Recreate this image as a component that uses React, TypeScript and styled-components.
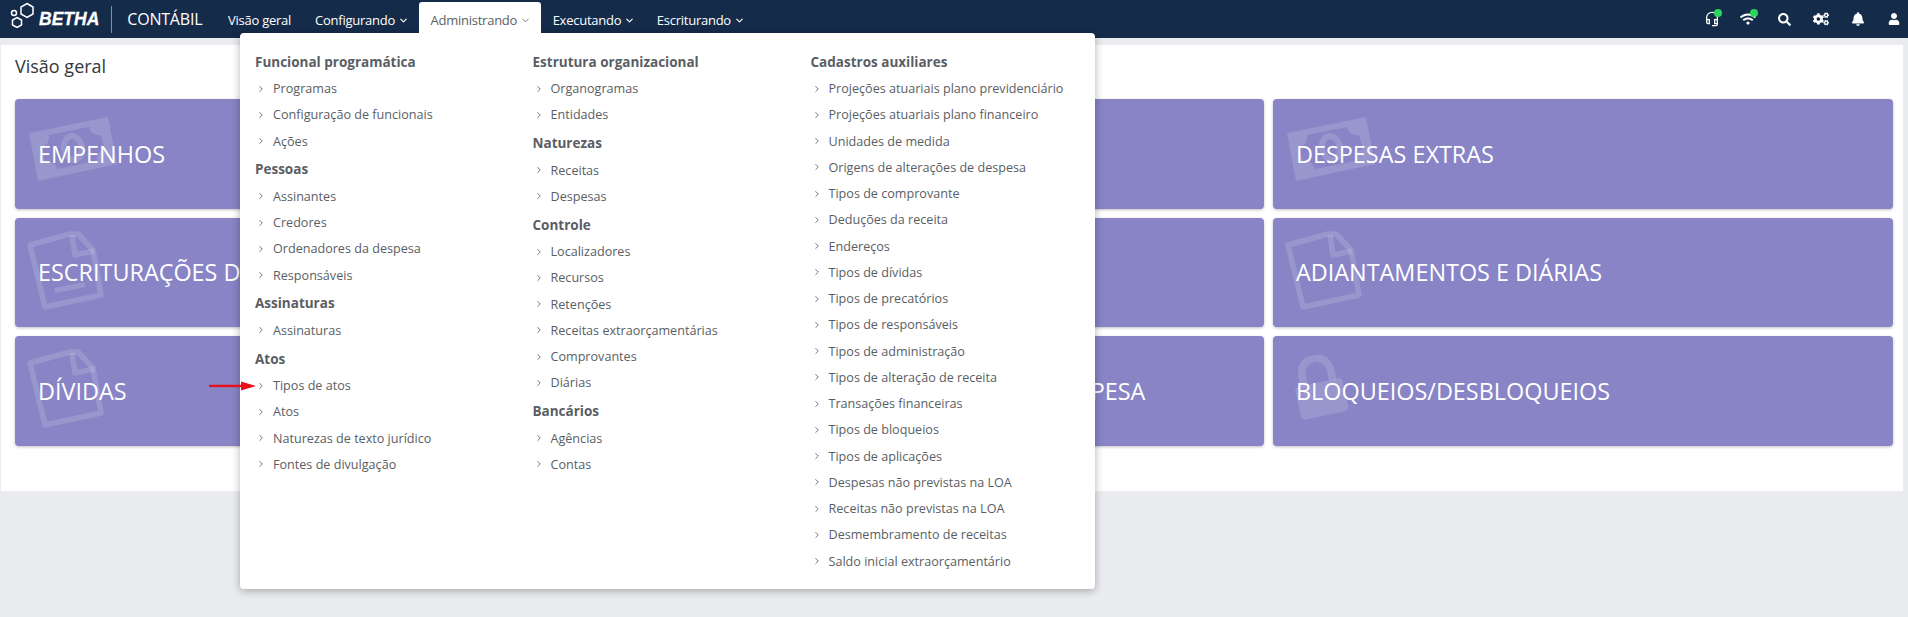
import React from "react"
import styled, { createGlobalStyle } from "styled-components"
import { ChevronDown, ChevronRight } from "lucide-react"
import { FaSearch, FaCogs, FaBell, FaUser, FaWifi } from "react-icons/fa"
import { MdOutlineHeadsetMic } from "react-icons/md"

const GlobalStyle = createGlobalStyle`
    html, body {
        margin: 0;
        padding: 0;
        height: 100%;
        background: #ebecf0;
        font-family: "Open Sans", "Noto Sans", sans-serif;
        overflow: hidden;
    }
`

type MenuEntry = { title: string; items: string[] }

const columns: MenuEntry[][] = [
    [
        { title: "Funcional programática", items: ["Programas", "Configuração de funcionais", "Ações"] },
        { title: "Pessoas", items: ["Assinantes", "Credores", "Ordenadores da despesa", "Responsáveis"] },
        { title: "Assinaturas", items: ["Assinaturas"] },
        { title: "Atos", items: ["Tipos de atos", "Atos", "Naturezas de texto jurídico", "Fontes de divulgação"] },
    ],
    [
        { title: "Estrutura organizacional", items: ["Organogramas", "Entidades"] },
        { title: "Naturezas", items: ["Receitas", "Despesas"] },
        { title: "Controle", items: ["Localizadores", "Recursos", "Retenções", "Receitas extraorçamentárias", "Comprovantes", "Diárias"] },
        { title: "Bancários", items: ["Agências", "Contas"] },
    ],
    [
        {
            title: "Cadastros auxiliares",
            items: [
                "Projeções atuariais plano previdenciário",
                "Projeções atuariais plano financeiro",
                "Unidades de medida",
                "Origens de alterações de despesa",
                "Tipos de comprovante",
                "Deduções da receita",
                "Endereços",
                "Tipos de dívidas",
                "Tipos de precatórios",
                "Tipos de responsáveis",
                "Tipos de administração",
                "Tipos de alteração de receita",
                "Transações financeiras",
                "Tipos de bloqueios",
                "Tipos de aplicações",
                "Despesas não previstas na LOA",
                "Receitas não previstas na LOA",
                "Desmembramento de receitas",
                "Saldo inicial extraorçamentário",
            ],
        },
    ],
]

type Glyph = "money" | "file" | "fileText" | "lock"

const cards: { label: string; icon: Glyph }[] = [
    { label: "EMPENHOS", icon: "money" },
    { label: "LIQUIDAÇÕES", icon: "money" },
    { label: "DESPESAS EXTRAS", icon: "money" },
    { label: "ESCRITURAÇÕES DE DESPESA", icon: "fileText" },
    { label: "RESTOS A PAGAR", icon: "file" },
    { label: "ADIANTAMENTOS E DIÁRIAS", icon: "file" },
    { label: "DÍVIDAS", icon: "file" },
    { label: "ALTERAÇÕES ORÇAMENTÁRIAS DA DESPESA", icon: "file" },
    { label: "BLOQUEIOS/DESBLOQUEIOS", icon: "lock" },
]

const Watermark: React.FC<{ icon: Glyph }> = ({ icon }) => {
    if (icon === "money") {
        return (
            <MoneyMark viewBox="0 0 92 72" fill="none">
                <path
                    fillRule="evenodd"
                    fill="currentColor"
                    d="M1 19 L80 3 L89 50 L10 67 Z M21 21 L61 13 A10 10 0 0 0 73 21 L77 35 A10 10 0 0 0 69 47 L29 55 A10 10 0 0 0 17 47 L13 33 A10 10 0 0 0 21 21 Z"
                />
                <ellipse cx="45" cy="34" rx="9" ry="12" stroke="currentColor" strokeWidth="6" transform="rotate(-12 45 34)" />
            </MoneyMark>
        )
    }
    if (icon === "lock") {
        return (
            <LockMark viewBox="0 0 60 72" fill="none">
                <path fill="currentColor" d="M6 32 L54 32 C57 32 58 34 58 36 L58 66 C58 69 56 71 54 71 L6 71 C3 71 2 69 2 66 L2 36 C2 34 3 32 6 32 Z" />
                <path stroke="currentColor" strokeWidth="9" d="M13 33 L13 22 C13 -3 47 -3 47 22 L47 33" />
            </LockMark>
        )
    }
    return (
        <FileMark viewBox="0 0 100 100" fill="none">
            <path stroke="currentColor" strokeWidth="5.5" strokeLinejoin="round" d="M15 27 L55 16 L63 16 L78 32 L86 77 L30 89 Z" />
            <path stroke="currentColor" strokeWidth="5.5" strokeLinejoin="round" d="M57 17 L60 37 L79 33" />
            {icon === "fileText" && <path stroke="currentColor" strokeWidth="5" d="M40 72.5 L70 66.5" />}
        </FileMark>
    )
}

const App: React.FC = () => {
    return (
        <Page>
            <GlobalStyle />
            <NavBar>
                <Brand>
                    <LogoMark viewBox="0 0 24 26" fill="none" stroke="#fff" strokeWidth="1.5">
                        <path d="M17 1.5 L23 5 L23 12 L17 15.5 L11 12 L11 5 Z" />
                        <path d="M7 15.5 L11.5 18 L11.5 23 L7 25.5 L2.5 23 L2.5 18 Z" />
                        <circle cx="4" cy="11" r="2.5" />
                    </LogoMark>
                    <BrandName>BETHA</BrandName>
                    <BrandDivider />
                    <ProductName>CONTÁBIL</ProductName>
                </Brand>
                <NavItem $plain>Visão geral</NavItem>
                <NavItem>Configurando <ChevronDown size={11} strokeWidth={2.5} /></NavItem>
                <NavItem $active>Administrando <ChevronDown size={11} strokeWidth={1.75} /></NavItem>
                <NavItem>Executando <ChevronDown size={11} strokeWidth={2.5} /></NavItem>
                <NavItem>Escriturando <ChevronDown size={11} strokeWidth={2.5} /></NavItem>
                <NavIcons>
                    <NavIcon $online><MdOutlineHeadsetMic size={20} /></NavIcon>
                    <NavIcon $online><FaWifi size={18} /></NavIcon>
                    <NavIcon><FaSearch size={13} /></NavIcon>
                    <NavIcon><FaCogs size={16} /></NavIcon>
                    <NavIcon><FaBell size={14} /></NavIcon>
                    <NavIcon><FaUser size={12} /></NavIcon>
                </NavIcons>
            </NavBar>
            <Panel>
                <PanelTitle>Visão geral</PanelTitle>
                <CardGrid>
                    {cards.map((c, i) => (
                        <Card key={i}>
                            <Watermark icon={c.icon} />
                            <CardLabel>{c.label}</CardLabel>
                        </Card>
                    ))}
                </CardGrid>
            </Panel>
            <Menu>
                {columns.map((col, i) => (
                    <div key={i}>
                        {col.map((group) => (
                            <div key={group.title}>
                                <MenuTitle>{group.title}</MenuTitle>
                                {group.items.map((item) => (
                                    <MenuItem key={item}>
                                        <ChevronRight size={10} />
                                        {item}
                                    </MenuItem>
                                ))}
                            </div>
                        ))}
                    </div>
                ))}
            </Menu>
            <RedArrow viewBox="0 0 48 10">
                <path d="M0 3.8 L32 3.8 L32 0.5 L47 5 L32 9.5 L32 6.2 L0 6 Z" fill="#e8101c" />
            </RedArrow>
        </Page>
    )
}

const Page = styled.div`
    position: relative;
    height: 617px;
    overflow: hidden;
    background: #ebecf0;
`

const NavBar = styled.div`
    height: 38px;
    background: #152b4a;
    display: flex;
    align-items: stretch;
    color: #fff;
`

const Brand = styled.div`
    width: 216px;
    display: flex;
    align-items: center;
    padding-left: 10px;
    box-sizing: border-box;
`

const LogoMark = styled.svg`
    width: 24px;
    height: 26px;
    margin-bottom: 8px;
    flex: none;
`

const BrandName = styled.span`
    font-family: "Liberation Sans", sans-serif;
    font-weight: 700;
    font-style: italic;
    font-size: 17.5px;
    margin-left: 5px;
    -webkit-text-stroke: 0.3px #fff;
`

const BrandDivider = styled.span`
    width: 1px;
    height: 27px;
    background: #8884c6;
    margin: 0 15px 0 12px;
`

const ProductName = styled.span`
    font-size: 16px;
    letter-spacing: -0.2px;
`

const NavItem = styled.div<{ $active?: boolean; $plain?: boolean }>`
    display: flex;
    align-items: center;
    gap: 3px;
    padding: 0 ${(p) => (p.$plain ? "12px" : "9.5px")} 0 12px;
    font-size: 13px;
    letter-spacing: -0.25px;
    white-space: nowrap;
    margin-top: 2px;
    border-radius: 3px 3px 0 0;
    background: ${(p) => (p.$active ? "#fff" : "transparent")};
    color: ${(p) => (p.$active ? "#5a5f66" : "#fff")};
    position: relative;
    z-index: 3;

    svg {
        margin-top: 1px;
    }
`

const NavIcons = styled.div`
    margin-left: auto;
    display: flex;
    align-items: center;
    gap: 20.5px;
    padding-right: 6px;
`

const NavIcon = styled.div<{ $online?: boolean }>`
    position: relative;
    width: 16px;
    height: 18px;
    display: flex;
    align-items: center;
    justify-content: center;

    &::after {
        content: "";
        display: ${(p) => (p.$online ? "block" : "none")};
        position: absolute;
        top: -1px;
        right: -2px;
        width: 8px;
        height: 8px;
        border-radius: 50%;
        background: #2bd45c;
    }
`

const Panel = styled.div`
    margin: 7px 5px 0 1px;
    height: 446px;
    background: #fff;
    padding: 0 10px 0 14px;
    box-sizing: border-box;
`

const PanelTitle = styled.div`
    height: 54px;
    display: flex;
    align-items: center;
    font-size: 18px;
    color: #33373d;
    padding-bottom: 12px;
    box-sizing: border-box;
`

const CardGrid = styled.div`
    display: grid;
    grid-template-columns: repeat(3, 620px);
    grid-auto-rows: 109.5px;
    gap: 9px;
`

const Card = styled.div`
    position: relative;
    background: #8884c6;
    border-radius: 4px;
    box-shadow: 0 1px 3px rgba(0, 0, 0, 0.25);
    display: flex;
    align-items: center;
    padding-left: 23px;
    overflow: hidden;
    color: rgba(255, 255, 255, 0.15);
`

const CardLabel = styled.span`
    position: relative;
    color: #fff;
    font-size: 23.4px;
    white-space: nowrap;
`

const MoneyMark = styled.svg`
    position: absolute;
    left: 13px;
    top: 15px;
    width: 92px;
    height: 72px;
`

const FileMark = styled.svg`
    position: absolute;
    left: 0;
    top: 0;
    width: 100px;
    height: 100px;
`

const LockMark = styled.svg`
    position: absolute;
    left: 20px;
    top: 19px;
    width: 52px;
    height: 62px;
    transform: rotate(-12deg);
`

const Menu = styled.div`
    position: absolute;
    left: 240px;
    top: 33px;
    width: 855px;
    height: 556px;
    box-sizing: border-box;
    padding: 13.5px 15px;
    background: #fff;
    border-radius: 4px;
    box-shadow: 0 2px 8px rgba(0, 0, 0, 0.3);
    display: grid;
    grid-template-columns: 277.5px 278px 1fr;
    z-index: 2;
`

const MenuTitle = styled.div`
    height: 29px;
    line-height: 31.5px;
    font-size: 13.5px;
    font-weight: 700;
    color: #5a5e64;
    white-space: nowrap;
`

const MenuItem = styled.div`
    height: 26.25px;
    display: flex;
    align-items: center;
    gap: 7px;
    font-size: 12.6px;
    color: #5a5e64;
    white-space: nowrap;

    svg {
        margin-left: 1px;
        flex: none;
    }
`

const RedArrow = styled.svg`
    position: absolute;
    left: 209px;
    top: 381px;
    width: 48px;
    height: 10px;
    z-index: 4;
`

export default App
